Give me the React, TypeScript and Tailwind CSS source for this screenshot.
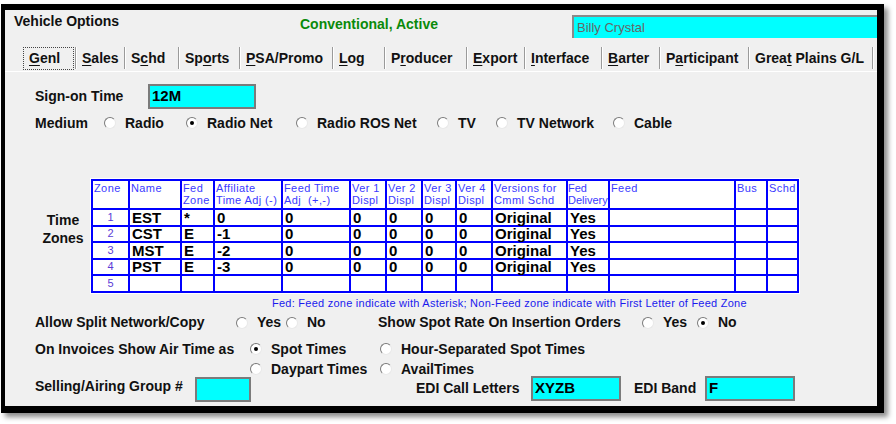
import React from 'react';

const font = "font-['Liberation_Sans',Arial,sans-serif]";

const Radio = ({ on }: { on?: boolean }) => (
  <span className="inline-flex h-[12px] w-[12px] shrink-0 items-center justify-center rounded-full border border-t-[#7a7a7a] border-l-[#7a7a7a] border-r-[#e8e8e8] border-b-[#e8e8e8] bg-white">
    {on && <span className="h-[4px] w-[4px] rounded-full bg-black" />}
  </span>
);

const Option = ({ label, on, w }: { label: string; on?: boolean; w: string }) => (
  <div className={`flex items-center gap-[9px] ${w}`}>
    <Radio on={on} />
    <span className="whitespace-nowrap">{label}</span>
  </div>
);

const Cyan = ({ w, value }: { w: string; value?: string }) => (
  <div className={`flex h-[25px] items-center border-2 border-[#7b7b7b] bg-[#00ffff] pl-[2px] text-[15px] font-bold text-black ${w}`}>
    {value}
  </div>
);

// tab label, underlined accelerator index, width
const TABS: [string, number, number][] = [
  ['Genl', 0, 54],
  ['Sales', 0, 49],
  ['Schd', 1, 54],
  ['Sports', 2, 61],
  ['PSA/Promo', 0, 93],
  ['Log', 0, 52],
  ['Producer', 1, 82],
  ['Export', 0, 58],
  ['Interface', 0, 77],
  ['Barter', 0, 58],
  ['Participant', 1, 89],
  ['Great Plains G/L', 4, 124],
];

const HEADERS = [
  ['Zone'],
  ['Name'],
  ['Fed', 'Zone'],
  ['Affiliate', 'Time Adj (-)'],
  ['Feed Time', 'Adj  (+,-)'],
  ['Ver 1', 'Displ'],
  ['Ver 2', 'Displ'],
  ['Ver 3', 'Displ'],
  ['Ver 4', 'Displ'],
  ['Versions for', 'Cmml Schd'],
  ['Fed', 'Delivery'],
  ['Feed'],
  ['Bus'],
  ['Schd'],
];

const ROWS = [
  ['1', 'EST', '*', '0', '0', '0', '0', '0', '0', 'Original', 'Yes', '', '', ''],
  ['2', 'CST', 'E', '-1', '0', '0', '0', '0', '0', 'Original', 'Yes', '', '', ''],
  ['3', 'MST', 'E', '-2', '0', '0', '0', '0', '0', 'Original', 'Yes', '', '', ''],
  ['4', 'PST', 'E', '-3', '0', '0', '0', '0', '0', 'Original', 'Yes', '', '', ''],
  ['5', '', '', '', '', '', '', '', '', '', '', '', '', ''],
];

const App: React.FC = () => {
  return (
    <div className={`h-[424px] w-[896px] overflow-hidden bg-white ${font}`}>
      <div className="ml-[1px] mt-[4px] h-[409px] w-[883px] border-t-[6px] border-l-[4px] border-r-[7px] border-b-[7px] border-black bg-[#f0f0f0] shadow-[4px_4px_5px_rgba(0,0,0,0.45)]">
        {/* header */}
        <div className="flex h-[35px] items-start">
          <div className="ml-[9px] mt-[3px] w-[286px] text-[14px] font-bold leading-[16px] text-[#111]">Vehicle Options</div>
          <div className="mt-[6px] w-[272px] text-[14px] font-bold leading-[16px] text-[#0a8a0a]">Conventional, Active</div>
          <div className="mt-[5px] flex h-[23px] flex-1 items-center border-l-2 border-t-2 border-[#8a8a8a] bg-[#00ffff] pl-[3px] text-[13px] text-[#666]">
            Billy Crystal
          </div>
        </div>

        {/* tabs */}
        <div className="flex h-[27px] items-center border-b border-white pl-[18px] text-[14px] font-bold text-[#111]">
          {TABS.map(([label, u, w], i) => (
            <div key={label} className="flex h-full items-center" style={{ width: w }}>
              <div className={`flex h-[23px] flex-1 items-center pl-[5px] ${i === 0 ? 'border border-dotted border-[#444]' : ''}`}>
                <span className="whitespace-nowrap">
                  {label.slice(0, u)}
                  <span className="underline underline-offset-2">{label[u]}</span>
                  {label.slice(u + 1)}
                </span>
              </div>
              <span className="ml-[1px] h-[22px] w-[1px] bg-[#9a9a9a]" />
              <span className="h-[22px] w-[1px] bg-white" />
            </div>
          ))}
        </div>

        {/* panel */}
        <div className="pl-[30px] text-[14px] font-bold text-[#111]">
          <div className="mt-[12px] flex h-[25px] items-center">
            <span className="w-[113px]">Sign-on Time</span>
            <Cyan w="w-[108px]" value="12M" />
          </div>

          <div className="mt-[5px] flex h-[18px] items-center">
            <span className="w-[69px]">Medium</span>
            <Option w="w-[82px]" label="Radio" />
            <Option w="w-[110px]" label="Radio Net" on />
            <Option w="w-[141px]" label="Radio ROS Net" />
            <Option w="w-[59px]" label="TV" />
            <Option w="w-[117px]" label="TV Network" />
            <Option w="w-[80px]" label="Cable" />
          </div>

          <div className="mt-[47px] flex items-center">
            <div className="mt-[-14px] w-[56px] text-center leading-[18px]">
              Time
              <br />
              Zones
            </div>
            <div className="grid grid-cols-[35px_50px_31px_66px_66px_34px_34px_32px_34px_73px_40px_124px_30px_29px] grid-rows-[27px_repeat(5,14.5px)] gap-[2px] bg-[#0000ff] p-[2px] outline outline-1 outline-white">
              {HEADERS.map((h, i) => (
                <div
                  key={'h' + i}
                  className={`overflow-hidden bg-white pt-[1px] text-[11px] font-normal leading-[12px] text-[#3a3aff] whitespace-nowrap ${i === 10 ? 'pl-0 tracking-[0px]' : 'pl-[1px] tracking-[0.4px]'}`}
                >
                  {h.map((line, j) => (
                    <div key={j} className="whitespace-pre">{line}</div>
                  ))}
                </div>
              ))}
              {ROWS.map((r, ri) =>
                r.map((c, ci) =>
                  ci === 0 ? (
                    <div key={ri + '-' + ci} className="flex items-center justify-center bg-white text-[11px] font-normal leading-none text-[#5a3cd6]">
                      {c}
                    </div>
                  ) : (
                    <div key={ri + '-' + ci} className="flex items-center overflow-visible bg-white pl-[2px] text-[15px] leading-none text-black">
                      {c}
                    </div>
                  )
                )
              )}
            </div>
          </div>

          <div className="ml-[237px] mt-[4px] h-[12px] text-[11px] font-normal leading-[12px] tracking-[0.25px] text-[#1a1aee] whitespace-nowrap">
            Fed: Feed zone indicate with Asterisk; Non-Feed zone indicate with First Letter of Feed Zone
          </div>

          <div className="mt-[5px] flex h-[18px] items-center">
            <span className="w-[201px]">Allow Split Network/Copy</span>
            <Option w="w-[50px]" label="Yes" />
            <Option w="w-[92px]" label="No" />
            <span className="w-[264px]">Show Spot Rate On Insertion Orders</span>
            <Option w="w-[55px]" label="Yes" />
            <Option w="w-[50px]" label="No" on />
          </div>

          <div className="mt-[8px] flex">
            <span className="w-[215px] leading-[18px]">On Invoices Show Air Time as</span>
            <div className="grid grid-cols-[130px_220px] gap-y-[2px] leading-[18px]">
              <Option w="" label="Spot Times" on />
              <Option w="" label="Hour-Separated Spot Times" />
              <Option w="" label="Daypart Times" />
              <Option w="" label="AvailTimes" />
            </div>
          </div>

          <div className="mt-[-2px] flex items-start">
            <span className="mt-[0px] w-[160px]">Selling/Airing Group #</span>
            <div className="mt-[1px]">
              <Cyan w="w-[56px]" />
            </div>
            <span className="ml-[165px] mt-[2px] w-[115px]">EDI Call Letters</span>
            <Cyan w="w-[90px]" value="XYZB" />
            <span className="ml-[13px] mt-[2px] w-[71px]">EDI Band</span>
            <Cyan w="w-[90px]" value="F" />
          </div>
        </div>
      </div>
    </div>
  );
};

export default App;
